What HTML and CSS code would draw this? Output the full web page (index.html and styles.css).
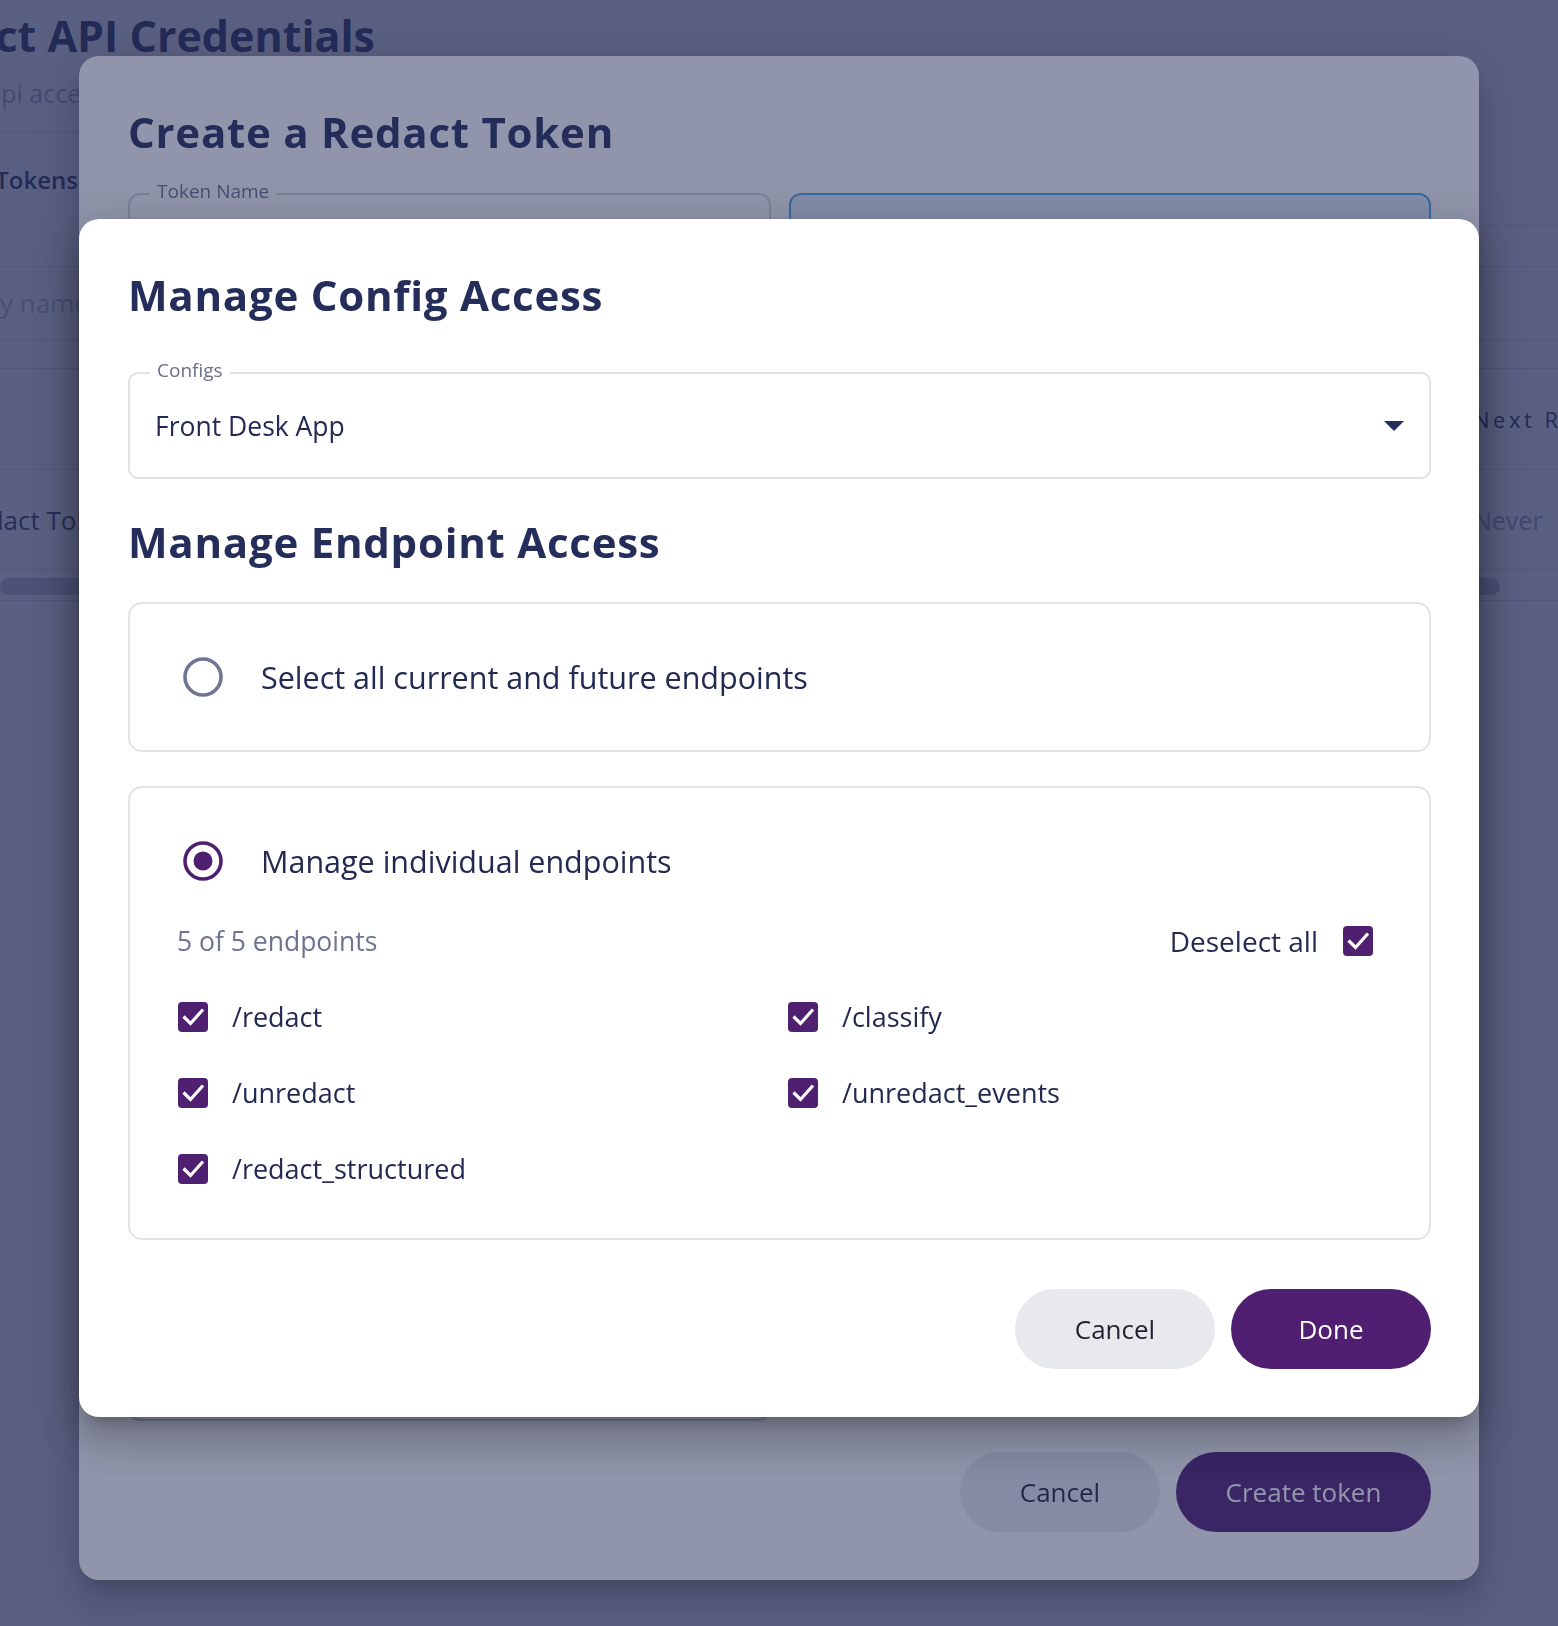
FILE: index.html
```html
<!DOCTYPE html>
<html lang="en">
<head>
<meta charset="utf-8">
<title>Redact API Credentials</title>
<link rel="stylesheet" href="styles.css">
</head>
<body>
<div class="page">
  <header class="page-head">
    <div class="title-row"><h1 class="page-title">Redact API Credentials</h1></div>
    <p class="page-sub">Manage your api access tokens</p>
  </header>
  <nav class="tabs">
    <div class="tab-cell"><span class="tab">API Tokens</span></div>
    <div class="tab-rest"></div>
  </nav>
  <div class="search"><span class="search-ph">Search by name</span></div>
  <div class="table">
    <div class="thead"><span class="th"></span><span class="th th-next">Next Rotation</span></div>
    <div class="trow"><span class="td-name">Redact Token</span><span class="td-next">Never</span></div>
  </div>
  <div class="scroll"><div class="thumb"></div></div>
</div>

<div class="backdrop"></div>
<section class="dialog dialog-outer">
  <h2 class="d-title">Create a Redact Token</h2>
  <div class="field-row">
    <div class="field"><span class="float-label">Token Name</span></div>
    <div class="field field-focused"></div>
  </div>
  <div class="field field-tall"></div>
  <div class="actions">
    <button class="btn btn-secondary">Cancel</button>
    <button class="btn btn-primary btn-wide">Create token</button>
  </div>
</section>

<div class="backdrop"></div>
<section class="dialog dialog-inner">
  <h2 class="d-title">Manage Config Access</h2>
  <div class="select">
    <span class="float-label">Configs</span>
    <span class="select-value">Front Desk App</span>
    <svg class="caret" width="20" height="10" viewBox="0 0 20 10"><path d="M0 0h20L10 10z" fill="#252d5a"/></svg>
  </div>
  <h2 class="d-title d-title-section">Manage Endpoint Access</h2>
  <div class="option option-all">
    <svg class="radio" width="40" height="40" viewBox="0 0 40 40"><circle cx="20" cy="20" r="18" fill="none" stroke="#6f7592" stroke-width="3.6"/></svg>
    <span class="option-label">Select all current and future endpoints</span>
  </div>
  <div class="option option-custom">
    <div class="option-head">
      <svg class="radio" width="40" height="40" viewBox="0 0 40 40"><circle cx="20" cy="20" r="18" fill="none" stroke="#4f1f70" stroke-width="3.6"/><circle cx="20" cy="20" r="9.5" fill="#4f1f70"/></svg>
      <span class="option-label">Manage individual endpoints</span>
    </div>
    <div class="ep-bar">
      <span class="ep-count">5 of 5 endpoints</span>
      <span class="ep-toggle">Deselect all
        <svg class="check" width="30" height="30" viewBox="0 0 30 30"><rect width="30" height="30" rx="4" fill="#4f1f70"/><path d="M5.5 14.5l7 7L25 7.5" fill="none" stroke="#fff" stroke-width="3.2"/></svg>
      </span>
    </div>
    <div class="ep-grid">
      <div class="ep"><svg class="check" width="30" height="30" viewBox="0 0 30 30"><rect width="30" height="30" rx="4" fill="#4f1f70"/><path d="M5.5 14.5l7 7L25 7.5" fill="none" stroke="#fff" stroke-width="3.2"/></svg><span>/redact</span></div>
      <div class="ep"><svg class="check" width="30" height="30" viewBox="0 0 30 30"><rect width="30" height="30" rx="4" fill="#4f1f70"/><path d="M5.5 14.5l7 7L25 7.5" fill="none" stroke="#fff" stroke-width="3.2"/></svg><span>/classify</span></div>
      <div class="ep"><svg class="check" width="30" height="30" viewBox="0 0 30 30"><rect width="30" height="30" rx="4" fill="#4f1f70"/><path d="M5.5 14.5l7 7L25 7.5" fill="none" stroke="#fff" stroke-width="3.2"/></svg><span>/unredact</span></div>
      <div class="ep"><svg class="check" width="30" height="30" viewBox="0 0 30 30"><rect width="30" height="30" rx="4" fill="#4f1f70"/><path d="M5.5 14.5l7 7L25 7.5" fill="none" stroke="#fff" stroke-width="3.2"/></svg><span>/unredact_events</span></div>
      <div class="ep"><svg class="check" width="30" height="30" viewBox="0 0 30 30"><rect width="30" height="30" rx="4" fill="#4f1f70"/><path d="M5.5 14.5l7 7L25 7.5" fill="none" stroke="#fff" stroke-width="3.2"/></svg><span>/redact_structured</span></div>
    </div>
  </div>
  <div class="actions">
    <button class="btn btn-secondary">Cancel</button>
    <button class="btn btn-primary">Done</button>
  </div>
</section>
</body>
</html>
```

FILE: styles.css
```css
* { box-sizing: border-box; }
html, body { margin: 0; overflow: hidden; }
body {
  width: 1558px;
  height: 1626px;
  background: #fff;
  font-family: "Open Sans", "Noto Sans", sans-serif;
  color: #232b57;
}

/* ---------- background page ---------- */
.page { padding-top: 12px; white-space: nowrap; }
.page-head {
  width: 1450px;
  border-bottom: 1px solid #d6d9e2;
  padding-bottom: 23px;
}
.title-row { display: flex; justify-content: flex-end; width: 375px; }
.page-title { margin: 0; font: 700 43px/48px "Open Sans", sans-serif; color: #232b57; }
.page-sub {
  margin: 18px 0 0 -172px;
  font: 400 25px/30px "Open Sans", sans-serif;
  color: #a3aabd;
}
.tabs { display: flex; }
.tab-cell {
  width: 79px;
  display: flex;
  justify-content: flex-end;
  padding: 32px 1px 30px 0;
}
.tab { font: 600 24px/32px "Open Sans", sans-serif; color: #232b57; }
.tab-rest { flex: 1; border-bottom: 1px solid #d6d9e2; }
.search {
  margin-top: 40px;
  height: 74px;
  border-top: 1px solid #d6d9e2;
  border-bottom: 1px solid #d6d9e2;
  display: flex;
  align-items: center;
}
.search-ph { margin-left: -105px; font: 400 26px/32px "Open Sans", sans-serif; color: #b7bccb; }
.table { margin-top: 28px; border-top: 1px solid #d6d9e2; }
.thead, .trow {
  display: grid;
  grid-template-columns: 1473px 1fr;
  align-items: center;
  border-bottom: 1px solid #d6d9e2;
}
.thead { height: 101px; }
.trow { height: 100px; }
.th { font: 400 22px/30px "Open Sans", sans-serif; letter-spacing: 3.5px; color: #232b57; }
.td-name { margin-left: -43px; font: 400 26px/32px "Open Sans", sans-serif; color: #2f3760; }
.td-next { font: 400 25px/32px "Open Sans", sans-serif; color: #9aa1b4; }
.scroll { height: 31px; padding-top: 8px; border-bottom: 1px solid #d6d9e2; }
.thumb { width: 1500px; height: 17px; border-radius: 9px; background: #c1c4cc; }

/* ---------- overlays & dialogs ---------- */
.backdrop { position: fixed; inset: 0; background: rgba(35, 43, 87, 0.5); }
.dialog {
  position: fixed;
  left: 79px;
  width: 1400px;
  background: #fff;
  border-radius: 20px;
  box-shadow: 0 11px 15px -7px rgba(0,0,0,.2), 0 24px 38px 3px rgba(0,0,0,.14), 0 9px 46px 8px rgba(0,0,0,.12);
  font-family: "Open Sans", "Noto Sans", sans-serif;
  color: #232a52;
  display: flex;
  flex-direction: column;
  padding: 52px 48px 48px 49px;
  white-space: nowrap;
}
.dialog-outer { top: 56px; height: 1524px; }
.dialog-inner { top: 219px; height: 1198px; }

.d-title {
  margin: 0;
  font: 700 42px/48px "Open Sans", sans-serif;
  letter-spacing: 0.75px;
  color: #252d5a;
}
.d-title-section { margin-top: 39px; }

.float-label {
  position: absolute;
  left: 20px;
  top: -15px;
  padding: 0 7px;
  background: #fff;
  font: 400 19px/22px "Open Sans", sans-serif;
  color: #6b7089;
}

/* outer dialog fields */
.field-row { margin-top: 37px; display: grid; grid-template-columns: 1fr 1fr; gap: 18px; }
.field { position: relative; height: 107px; border: 2px solid #d3d6de; border-radius: 12px; background: #fff; }
.field-focused { border-color: #4ea6e4; background: #e0edf8; }
.field-tall { margin-top: 24px; width: 642px; height: 1097px; border-color: #c3c7d2; }

/* select */
.select {
  position: relative;
  margin-top: 53px;
  height: 107px;
  border: 2px solid #e1e2e7;
  border-radius: 10px;
  display: flex;
  align-items: center;
  padding: 0 25px 0 25px;
}
.select-value { flex: 1; font: 400 26.5px/30px "Open Sans", sans-serif; color: #232a52; }
.caret { display: block; }

/* options */
.option { border: 2px solid #e3e4e8; border-radius: 14px; }
.option-all {
  margin-top: 36px;
  height: 150px;
  display: flex;
  align-items: center;
  gap: 38px;
  padding-left: 53px;
}
.option-custom { margin-top: 34px; padding: 53px 56px 54px 48px; }
.option-head { display: flex; align-items: center; gap: 38px; height: 40px; margin-left: 5px; }
.radio { display: block; flex: none; }
.option-label { font: 400 30.5px/34px "Open Sans", sans-serif; color: #232a52; }

.ep-bar {
  margin-top: 45px;
  height: 30px;
  display: flex;
  align-items: center;
  justify-content: space-between;
}
.ep-count { font: 400 26.5px/30px "Open Sans", sans-serif; color: #6e7491; margin-left: -1px; }
.ep-toggle { display: flex; align-items: center; gap: 25px; font: 400 28px/30px "Open Sans", sans-serif; color: #232a52; }
.check { display: block; flex: none; }
.ep-grid { margin-top: 46px; display: grid; grid-template-columns: 610px 1fr; row-gap: 46px; }
.ep { display: flex; align-items: center; gap: 24px; height: 30px; font: 400 27px/30px "Open Sans", sans-serif; color: #232a52; }

/* buttons */
.actions { margin-top: auto; display: flex; justify-content: flex-end; gap: 16px; }
.btn {
  width: 200px;
  height: 80px;
  border: 0;
  border-radius: 40px;
  padding: 0;
  font: 400 26px/30px "Open Sans", sans-serif;
  cursor: pointer;
}
.btn-wide { width: 255px; }
.btn-secondary { background: #e8e9ed; color: #1f2330; }
.btn-primary { background: #511f72; color: #fff; }
```
